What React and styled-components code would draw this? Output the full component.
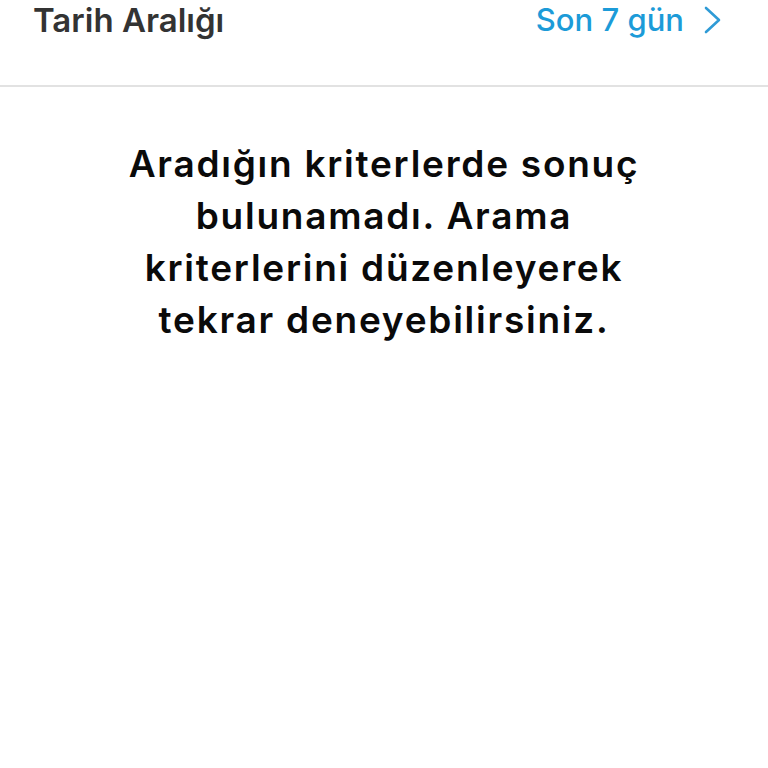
import React from 'react';
import styled, { createGlobalStyle } from 'styled-components';

const GlobalStyle = createGlobalStyle`
  html, body {
    margin: 0;
    padding: 0;
    background: #fff;
    font-family: Inter, "Noto Sans", sans-serif;
  }
`;

const Page = styled.div`
  width: 768px;
  height: 768px;
  overflow: hidden;
  background: #fff;
`;

const FilterRow = styled.div`
  height: 85px;
  display: flex;
  justify-content: space-between;
  align-items: flex-start;
  padding: 0 46px 0 33px;
  border-bottom: 2px solid #e2e2e2;
`;

const Label = styled.span`
  font-size: 33px;
  font-weight: 600;
  line-height: 40px;
  color: #333;
`;

const Value = styled.button`
  display: flex;
  align-items: center;
  gap: 20px;
  border: 0;
  background: none;
  padding: 0;
  font-family: inherit;
  font-size: 31px;
  font-weight: 500;
  line-height: 40px;
  color: #1c9bd8;
`;

const Message = styled.p`
  margin: 51px auto 0;
  width: 560px;
  text-align: center;
  font-size: 37px;
  font-weight: 600;
  letter-spacing: 1.75px;
  line-height: 52px;
  color: #0a0a0a;
`;

function Chevron() {
  return (
    <svg width="18" height="28" viewBox="0 0 18 28">
      <path d="M2 2 L15 14 L2 26" fill="none" stroke="#2f9bd6" strokeWidth="2.6" strokeLinecap="round" strokeLinejoin="round" />
    </svg>
  );
}

export default function App() {
  return (
    <Page>
      <GlobalStyle />
      <FilterRow>
        <Label>Tarih Aralığı</Label>
        <Value>
          Son 7 gün
          <Chevron />
        </Value>
      </FilterRow>
      <Message>
        Aradığın kriterlerde sonuç bulunamadı. Arama kriterlerini düzenleyerek tekrar deneyebilirsiniz.
      </Message>
    </Page>
  );
}
